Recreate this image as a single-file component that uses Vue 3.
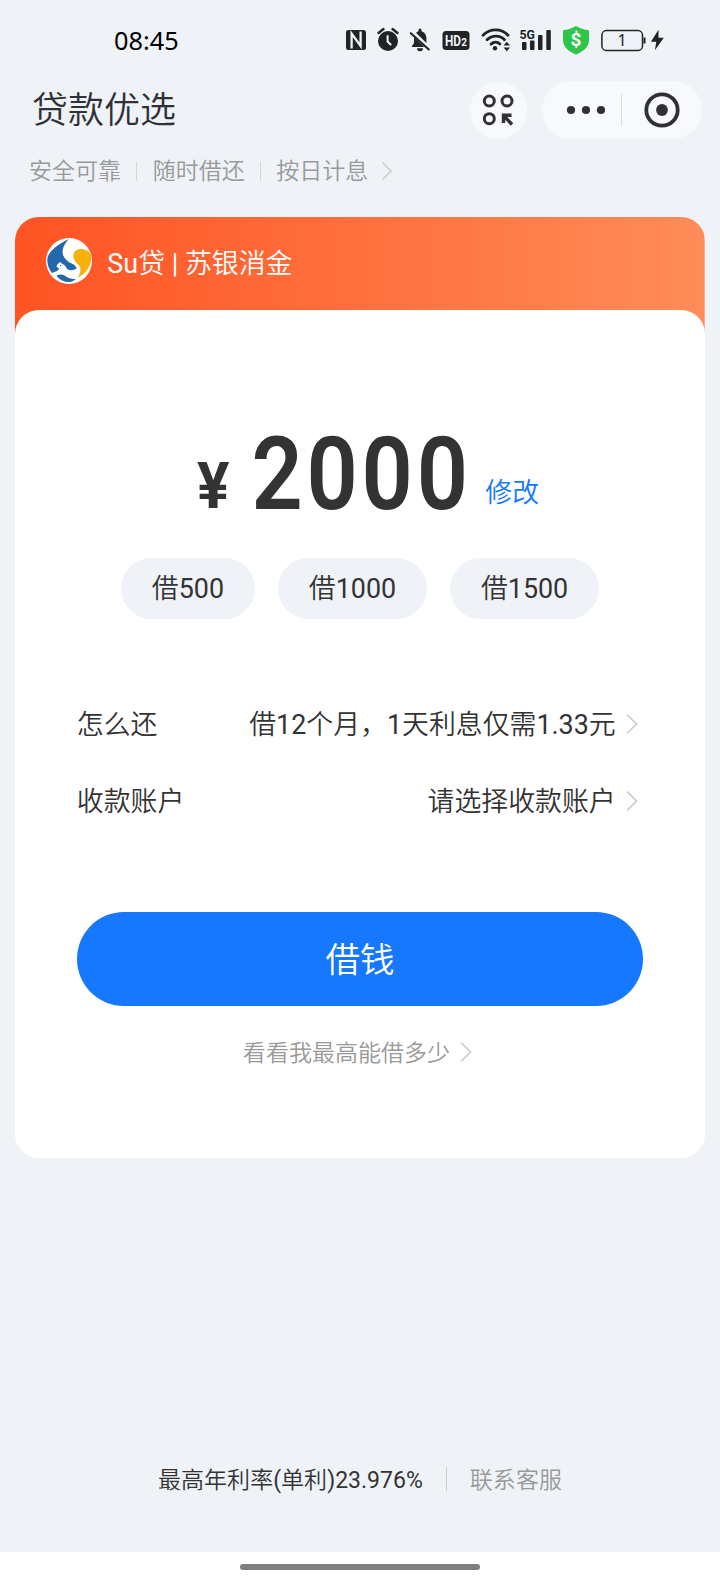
<script setup>
import { h } from 'vue'

const features = ['安全可靠', '随时借还', '按日计息']
const quickAmounts = [500, 1000, 1500]
const rows = [
  { label: '怎么还', value: '借12个月，1天利息仅需1.33元' },
  { label: '收款账户', value: '请选择收款账户' },
]

// Latin letters and digits are set one step heavier than the Chinese text.
const MixedText = (props) =>
  h('span', props.text.split(/([\x20-\x7e]+)/).filter(Boolean).map((run) =>
    /^[\x20-\x7e]/.test(run) ? h('b', run) : run))
MixedText.props = ['text']
</script>

<template>
  <div class="page">
    <div class="status">
      <span class="time">08:45</span>
      <svg class="status-icons" width="330" height="40" viewBox="340 20 330 40">
        <g fill="#222327">
          <rect x="346" y="30" width="20" height="20" rx="2.5" />
          <path d="M351.600 48.500V33.500L360.600 46V31.500" fill="none" stroke="#eff3f8" stroke-width="2.300" />
          <circle cx="388" cy="41" r="10" />
          <path d="M378.5 33l5-4M397.500 33l-5-4" stroke="#222327" stroke-width="2.4" stroke-linecap="round" />
          <path d="M387.600 36v5.500l3 3" fill="none" stroke="#eff3f8" stroke-width="2" stroke-linecap="round" />
          <path d="M411.500 47l2.500-4V38c0-3.500 2-6 4.500-6.800v-1.200a1.500 1.500 0 0 1 3 0v1.200c3 .8 4.900 3.600 4.900 6.800v6l3 3zM417 48.300h6a3 3 0 0 1-6 0z" />
          <path d="M411.500 31.500l19 18.500" stroke="#eff3f8" stroke-width="4.500" />
          <path d="M410.800 33.200l18 16.300" stroke="#222327" stroke-width="2.100" stroke-linecap="round" />
          <rect x="442.500" y="31" width="27" height="19" rx="3.500" />
          <text x="445" y="45.600" class="hd" textLength="16" lengthAdjust="spacingAndGlyphs">HD</text>
          <text x="461.300" y="46.300" class="hd-two">2</text>
          <g fill="none" stroke="#222327" stroke-width="2.800" stroke-linecap="round">
            <path d="M483 35.200c7-7 18.500-7 25 0" />
            <path d="M487 39.800c5-5 13-5 17.500 0" />
            <path d="M491 44.100c3-2.600 6.500-2.600 9 0" />
          </g>
          <circle cx="495" cy="48.200" r="2.200" />
          <path d="M503.500 45.600l3.300-3.800 3.300 3.800zM503.500 47.400l3.300 3.800 3.300-3.800z" />
          <text x="519.500" y="39" class="five" textLength="15.500" lengthAdjust="spacingAndGlyphs">5G</text>
          <rect x="522" y="42" width="4.500" height="8" rx="1" />
          <rect x="530" y="40.500" width="4.500" height="9.500" rx="1" />
          <rect x="538" y="35" width="4.500" height="15" rx="1" />
          <rect x="546.300" y="30" width="4.500" height="20" rx="1" />
          <path d="M576 26c3.800 2.300 8 3.700 13 4.200v9.500c0 7-5 11.600-13 14.800-8-3.200-13-7.800-13-14.800v-9.500c5-.5 9.200-1.900 13-4.200z" fill="#2fc54b" />
          <text x="576" y="46.200" class="dollar">$</text>
          <rect x="601.900" y="30.600" width="40.600" height="19.800" rx="4.500" fill="none" stroke="#222327" stroke-width="1.500" />
          <path d="M644.500 37.500v6" stroke="#222327" stroke-width="2" />
          <text x="622" y="46.300" class="level">1</text>
          <path d="M658.500 29.800l-7.600 12h5.400l-1.400 8.400 8.900-12.400h-5.300z" />
        </g>
      </svg>
    </div>

    <header class="nav">
      <h1 class="title">贷款优选</h1>
      <div class="round">
        <svg width="32" height="32" viewBox="0 0 32 32" fill="none" stroke="#303136" stroke-width="3">
          <circle cx="7.300" cy="7" r="5" />
          <circle cx="25" cy="7" r="5" />
          <circle cx="7.300" cy="24.700" r="5" />
          <path d="M21.500 29V21.200H29.500M21.500 21.500L30 30.500" stroke-width="3.400" />
        </svg>
      </div>
      <div class="capsule">
        <svg class="dots" width="40" height="10" viewBox="0 0 40 10" fill="#303136">
          <circle cx="5" cy="5" r="4.100" /><circle cx="20" cy="5" r="4.100" /><circle cx="35" cy="5" r="4.100" />
        </svg>
        <i class="capsule-line" />
        <svg class="target" width="36" height="36" viewBox="0 0 36 36">
          <circle cx="18" cy="18" r="15.700" fill="none" stroke="#303136" stroke-width="3.800" />
          <circle cx="18" cy="18" r="5.900" fill="#303136" />
        </svg>
      </div>
    </header>

    <div class="features">
      <span v-for="f in features" :key="f" class="feature">{{ f }}</span>
      <svg class="chevron feature-chevron" width="12" height="20" viewBox="0 0 12 20"><path d="M1.500 1.500L10 10L1.500 18.500" /></svg>
    </div>

    <main class="card">
      <div class="brand">
        <svg class="logo" width="46" height="46" viewBox="0 0 138 138">
          <circle cx="69" cy="69" r="69" fill="#fff" />
          <path d="M68 3C50 13 15 30 5 57C1 77 9 94 18 105L33 99L40 92L32 86C31 80 38 75 44 72L48 77C58 80 60 89 65 94C74 99 88 96 92 91C87 76 73 78 65 69C45 54 43 31 68 3Z" fill="#2367ac" />
          <path d="M31 113C44 107 51 109 61 116C68 121 78 123 90 123C74 138 49 135 31 113Z" fill="#2367ac" />
          <path d="M84 44C92 28 123 29 134 49C141 77 122 107 96 119C102 105 107 94 100 84C91 74 77 61 84 44Z" fill="#f8b10c" />
          <circle cx="44" cy="83" r="2" fill="#2367ac" />
        </svg>
        <MixedText class="brand-name" text="Su贷 | 苏银消金" />
      </div>

      <section class="panel">
        <div class="amount">
          <svg class="figure" width="276" height="90" viewBox="0 0 276 90">
            <text x="1" y="80.500" class="yen" textLength="32.500" lengthAdjust="spacingAndGlyphs">¥</text>
            <text transform="translate(55.500 81.500) scale(.88 1)" class="digits">2000</text>
          </svg>
          <a class="edit">修改</a>
        </div>

        <div class="chips">
          <button v-for="n in quickAmounts" :key="n" class="chip"><MixedText :text="`借${n}`" /></button>
        </div>

        <div class="rows">
          <div v-for="r in rows" :key="r.label" class="row">
            <span>{{ r.label }}</span>
            <MixedText class="value" :text="r.value" />
            <svg class="chevron" width="12" height="22" viewBox="0 0 12 22"><path d="M1 1.500L10.500 11L1 20.500" /></svg>
          </div>
        </div>

        <button class="borrow">借钱</button>
        <div class="more">
          <span>看看我最高能借多少</span>
          <svg class="chevron" width="12" height="22" viewBox="0 0 12 22"><path d="M1 1.500L10.500 11L1 20.500" /></svg>
        </div>
      </section>
    </main>

    <footer class="footer">
      <MixedText text="最高年利率(单利)23.976%" />
      <i class="footer-line" />
      <span class="service">联系客服</span>
    </footer>
    <div class="home"><i class="home-bar" /></div>
  </div>
</template>

<style>
body { margin: 0; background: #eff3f8; }
</style>

<style scoped>
.page {
  width: 720px;
  height: 1584px;
  display: flex;
  flex-direction: column;
  background: #eff3f8;
  color: #333;
  font-family: Roboto, "Noto Sans CJK SC", sans-serif;
  font-size: 26.88px;
  font-weight: 350;
  overflow: hidden;
}
.page :deep(*) { box-sizing: border-box; }
.page :deep(b) { font-weight: 400; }
.status { height: 81px; display: flex; padding: 20px 50px 0 114px; justify-content: space-between; flex: none; }
.time { font: 400 25.300px/40px "Noto Sans", sans-serif; color: #000; }
.hd { font: 700 14px Roboto, sans-serif; fill: #eff3f8; }
.hd-two { font: 700 10px Roboto, sans-serif; fill: #eff3f8; }
.five { font: 700 13.500px Roboto, sans-serif; }
.dollar { font: 700 19px Roboto, sans-serif; fill: #fff; text-anchor: middle; }
.level { font: 400 16px "Noto Sans", sans-serif; text-anchor: middle; }

.nav { height: 58px; display: flex; align-items: center; padding: 0 18px 0 32px; flex: none; }
.title { margin: 0 auto 0 0; padding-top: 2px; font-size: 36px; line-height: 58px; font-weight: 350; color: #303136; }
.round { width: 57px; height: 57px; border-radius: 50%; background: #f8f9fb; display: flex; align-items: center; justify-content: center; padding-right: 2px; }
.capsule { width: 160px; height: 58px; margin-left: 15px; border-radius: 29px; background: #f8f9fb; display: flex; align-items: center; }
.dots { margin-left: 24px; }
.capsule-line { width: 1px; height: 32px; margin-left: 15px; background: #d9dbdf; }
.target { margin-left: 22px; }

.features { height: 78px; display: flex; align-items: flex-start; padding: 16.400px 0 0 29px; color: #999; font-size: 23.040px; line-height: 34px; flex: none; }
.feature + .feature { display: flex; align-items: center; }
.feature + .feature::before { content: ""; width: 1px; height: 19px; margin: -1px 15.500px 0 15px; background: #d2d4d8; }
.chevron { fill: none; stroke: #ccc; stroke-width: 1.700; flex: none; }
.feature-chevron { margin: 6px 0 0 12.500px; }

.card { width: 689.300px; height: 940.500px; margin-left: 15.360px; border-radius: 24px; background: linear-gradient(90deg, #ff5323, #ff8d59) top / 100% 130px no-repeat; overflow: hidden; flex: none; }
.brand { height: 92.500px; display: flex; align-items: flex-start; padding: 20.500px 0 0 31px; color: #fff; }
.brand-name { margin-left: 15px; line-height: 53px; font-size: 26.880px; }
.panel { height: 848px; border-radius: 24px 24px 0 0; background: #fff; padding: 117.500px 61.440px 0; }
.amount { height: 90px; display: flex; padding-left: 119px; }
.figure { fill: #333; overflow: visible; }
.yen { font: 700 64px Roboto, sans-serif; }
.digits { font: 600 102px Roboto, sans-serif; letter-spacing: 4.300px; }
.edit { margin: 46px 0 0 13.500px; line-height: 40px; color: #1677ff; }
.chips { display: flex; justify-content: center; gap: 23px; margin-top: 40.500px; }
button { border: 0; font-family: inherit; font-weight: 350; color: inherit; }
.chip { height: 61px; border-radius: 31px; padding: 1.500px 30.900px 0; background: #eff3f8; font-size: 26.880px; line-height: 61px; }
.rows { margin-top: 66.500px; }
.row { height: 77px; display: flex; align-items: center; padding-right: 5px; }
.row span { margin-top: -1.500px; }
.row .value { margin: -1.500px 10.500px 0 auto; }
.borrow { display: block; width: 100%; height: 94px; margin-top: 73px; border-radius: 47px; background: #1677ff; color: #fff; font-size: 34.560px; line-height: 94px; padding: 1px 0 0; }
.more { display: flex; align-items: center; justify-content: center; gap: 10px; height: 40px; margin-top: 26px; padding-right: 5px; color: #999; font-size: 23.040px; }
.more span { margin-top: -2px; }
.footer { margin-top: auto; height: 40px; margin-bottom: 53px; display: flex; align-items: center; justify-content: center; font-size: 23.040px; }
.footer span { margin-top: -3px; }
.footer-line { width: 1px; height: 24px; margin: 0 23px; background: #ccc; }
.service { color: #999; }
.home { height: 32px; background: #fff; flex: none; display: flex; justify-content: center; padding-top: 12px; }
.home-bar { width: 240px; height: 6px; border-radius: 3px; background: #7f7f7f; }
</style>
